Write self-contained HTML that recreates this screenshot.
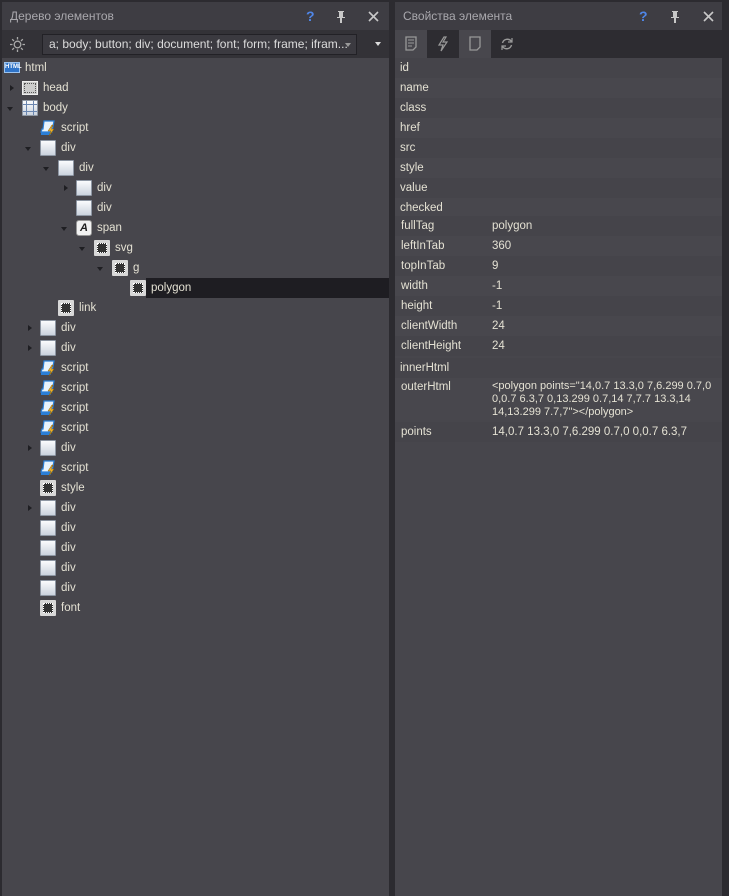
<!DOCTYPE html>
<html><head><meta charset="utf-8"><style>
*{margin:0;padding:0;box-sizing:border-box}
body{width:729px;height:896px;background:#2c2b30;font-family:"Liberation Sans",sans-serif;font-size:11.5px;position:relative;overflow:hidden}
.p{position:absolute;top:2px;bottom:0;background:#47464c}
.hd{position:absolute;left:0;right:0;top:0;height:28px;background:#3e3d43;color:#a9a8ad;font-size:12px;line-height:28px;padding-left:8px}
.tb{position:absolute;left:0;right:0;top:28px;height:28px;background:#333237}
.a{position:absolute;white-space:nowrap}
.t{color:#e4e1d3;line-height:20px}
.ic{position:absolute;width:16px;height:16px}
.dv{background:linear-gradient(#fafbfd,#cbd3de);border:1px solid #8e97a4;border-radius:1px}
.dt{background:#d8d8d8;border-radius:1px}
.dt:after{content:"";position:absolute;left:3px;top:3px;width:10px;height:10px;background:#333;outline:1px dotted #fff;outline-offset:-1px}
.ar{position:absolute;width:0;height:0}
.ad{border-left:3px solid transparent;border-right:3px solid transparent;border-top:4px solid #1e1e22}
.ar.ar-r{border-top:3px solid transparent;border-bottom:3px solid transparent;border-left:4px solid #1e1e22}
.r{position:absolute;left:0;right:0;height:20px;color:#e4e1d3;line-height:20px;padding-left:5px}
.r span{position:absolute;left:97px}
</style></head><body>
<div class="p" style="left:2px;width:387px">
<div class="hd">Дерево элементов
<span class="a" style="left:304px;color:#4f86e8;font-weight:bold;font-size:14px">?</span>
<span class="a" style="left:334px;top:0"><svg width="10" height="14" viewBox="0 0 10 14" style="vertical-align:middle"><path d="M2 1h6v1H7v5h2v1H6v5H4V8H1V7h2V2H2z" fill="#c8c8c8"/></svg></span>
<span class="a" style="left:366px;top:0"><svg width="11" height="11" viewBox="0 0 11 11" style="vertical-align:middle"><path d="M1 1l9 9M10 1L1 10" stroke="#c8c8c8" stroke-width="1.6"/></svg></span>
</div>
<div class="tb">
<svg class="a" style="left:8px;top:7px" width="15" height="15" viewBox="0 0 15 15"><circle cx="7.5" cy="7.5" r="3.3" fill="none" stroke="#aaa" stroke-width="1.3"/><g stroke="#aaa" stroke-width="1.3"><path d="M7.5 0v2.5M7.5 12.5V15M0 7.5h2.5M12.5 7.5H15M2.2 2.2l1.8 1.8M11 11l1.8 1.8M2.2 12.8L4 11M11 4l1.8-1.8"/></g></svg>
<div class="a" style="left:40px;top:4px;width:315px;height:21px;background:#3b3a40;border:1px solid #222126;color:#dcdcdc;line-height:19px;padding-left:6px;font-size:12px">a; body; button; div; document; font; form; frame; ifram...
<div class="ar ad" style="left:302px;top:8px;border-top-color:#999"></div></div>
<div class="ar ad" style="left:373px;top:12px;border-top-color:#ddd"></div>
</div>
<div class="a" style="left:144px;top:276px;width:243px;height:20px;background:#1e1d22"></div>
<div id="tree"></div>
</div>
<div class="p" style="left:395px;width:327px">
<div class="hd">Свойства элемента
<span class="a" style="left:244px;color:#4f86e8;font-weight:bold;font-size:14px">?</span>
<span class="a" style="left:275px"><svg width="10" height="14" viewBox="0 0 10 14" style="vertical-align:middle"><path d="M2 1h6v1H7v5h2v1H6v5H4V8H1V7h2V2H2z" fill="#c8c8c8"/></svg></span>
<span class="a" style="left:308px"><svg width="11" height="11" viewBox="0 0 11 11" style="vertical-align:middle"><path d="M1 1l9 9M10 1L1 10" stroke="#c8c8c8" stroke-width="1.6"/></svg></span>
</div>
<div class="tb" style="background:#2d2c31">
<div class="a" style="left:0;top:0;width:32px;height:28px;background:#48474d"><svg class="a" style="left:10px;top:6px" width="12" height="15"><path d="M1 1h10v10l-3 3H1z" fill="none" stroke="#999" stroke-width="1.3"/><path d="M3 4h6M3 7h6M3 10h4" stroke="#999"/></svg></div>
<svg class="a" style="left:42px;top:6px" width="12" height="16"><path d="M7 1L2 9h4l-2 6 6-9H6l3-5z" fill="none" stroke="#999" stroke-width="1.2"/></svg>
<div class="a" style="left:64px;top:0;width:32px;height:28px;background:#48474d"><svg class="a" style="left:10px;top:6px" width="12" height="15"><path d="M1 1h10v10l-3 3H1z" fill="none" stroke="#999" stroke-width="1.3"/></svg></div>
<svg class="a" style="left:105px;top:7px" width="14" height="14"><path d="M2.5 6A5 5 0 0 1 11.5 4.5M11.5 8A5 5 0 0 1 2.5 9.5" fill="none" stroke="#999" stroke-width="1.4"/><path d="M12 1v4H8M2 13V9h4" fill="none" stroke="#999" stroke-width="1.2"/></svg>
</div>
<div id="props"></div>
</div>
<script>
var T=[[0,0,'html','html'],[1,'r','hd','head'],[1,'d','bd','body'],[2,0,'sc','script'],[2,'d','dv','div'],[3,'d','dv','div'],[4,'r','dv','div'],[4,0,'dv','div'],[4,'d','A','span'],[5,'d','dt','svg'],[6,'d','dt','g'],[7,0,'dt','polygon'],[3,0,'dt','link'],[2,'r','dv','div'],[2,'r','dv','div'],[2,0,'sc','script'],[2,0,'sc','script'],[2,0,'sc','script'],[2,0,'sc','script'],[2,'r','dv','div'],[2,0,'sc','script'],[2,0,'dt','style'],[2,'r','dv','div'],[2,0,'dv','div'],[2,0,'dv','div'],[2,0,'dv','div'],[2,0,'dv','div'],[2,0,'dt','font']];
var h='';T.forEach(function(e,i){var y=56+i*20,ix=e[0]==0?2:4+e[0]*18-2,tx=ix+21,L=e[0];
if(e[1]=='d')h+='<div class="ar ad" style="left:'+(ix-15)+'px;top:'+(y+9)+'px"></div>';
if(e[1]=='r')h+='<div class="ar ar-r" style="left:'+(ix-12)+'px;top:'+(y+7)+'px"></div>';
var k=e[2],ic='';
if(k=='html')ic='<div class="ic" style="left:'+ix+'px;top:'+(y+4)+'px;width:16px;height:11px;background:#2f74c9;border:1px solid #9cc3ee;color:#fff;font-size:6px;font-weight:bold;line-height:9px;text-align:center">HTML</div>';
else if(k=='hd')ic='<div class="ic" style="left:'+ix+'px;top:'+(y+3)+'px;height:14px;background:#ccc;border:1px solid #eee;outline:1px dotted #555;outline-offset:-3px"></div>';
else if(k=='bd')ic='<div class="ic dv" style="left:'+ix+'px;top:'+(y+2)+'px"><div style="position:absolute;left:3px;top:0;width:8px;height:14px;border-left:1px solid #6a86b0;border-right:1px solid #6a86b0"></div><div style="position:absolute;left:0;top:3px;width:14px;height:8px;border-top:1px solid #6a86b0;border-bottom:1px solid #6a86b0"></div></div>';
else if(k=='dv')ic='<div class="ic dv" style="left:'+ix+'px;top:'+(y+2)+'px"></div>';
else if(k=='dt')ic='<div class="ic dt" style="left:'+ix+'px;top:'+(y+2)+'px"></div>';
else if(k=='A')ic='<div class="ic" style="left:'+ix+'px;top:'+(y+2)+'px;background:#f2f2f2;border:1px solid #999;border-radius:3px;color:#222;font-weight:bold;font-style:italic;font-size:11px;line-height:14px;text-align:center">A</div>';
else if(k=='sc')ic='<svg class="ic" style="left:'+ix+'px;top:'+(y+2)+'px" viewBox="0 0 16 16"><path d="M4 1h10l-2 11H1l1-3h1z" fill="#e8f2fb" stroke="#2b7fd6" stroke-width="1.2"/><path d="M1 12h9l1 3H1z" fill="#2b7fd6"/><path d="M12 5l-4 6h3l-2 5 5-7h-3l2-4z" fill="#f0b42a" stroke="#8a5a00" stroke-width=".5"/></svg>';
h+=ic+'<div class="a t" style="left:'+tx+'px;top:'+y+'px">'+e[3]+'</div>';});
document.getElementById('tree').innerHTML=h;
var P=[['id'],['name'],['class'],['href'],['src'],['style'],['value'],['checked'],['fullTag','polygon'],['leftInTab','360'],['topInTab','9'],['width','-1'],['height','-1'],['clientWidth','24'],['clientHeight','24']];
var q='';P.forEach(function(e,i){var y=56+i*20,bg=i%2?'#48474d':'#45444a';if(i>7)y-=2;if(i==8)bg='#45444a';q+='<div class="r" style="top:'+y+'px;background:'+bg+';'+(i>7?'padding-left:6px':'')+'">'+e[0]+(e[1]?'<span>'+e[1]+'</span>':'')+'</div>';});
q+='<div class="r" style="top:356px;background:#45444a">innerHtml</div>';
q+='<div class="r" style="top:376px;height:42px;background:#48474d;padding-left:6px;line-height:14px;padding-top:2px">outerHtml<span style="line-height:13px;top:2px;width:230px;white-space:normal;font-size:11px">&lt;polygon points="14,0.7 13.3,0 7,6.299 0.7,0 0,0.7 6.3,7 0,13.299 0.7,14 7,7.7 13.3,14 14,13.299 7.7,7"&gt;&lt;/polygon&gt;</span></div>';
q+='<div class="r" style="top:420px;background:#45444a;padding-left:6px">points<span>14,0.7 13.3,0 7,6.299 0.7,0 0,0.7 6.3,7</span></div>';
document.getElementById('props').innerHTML=q;
</script>
</body></html>
